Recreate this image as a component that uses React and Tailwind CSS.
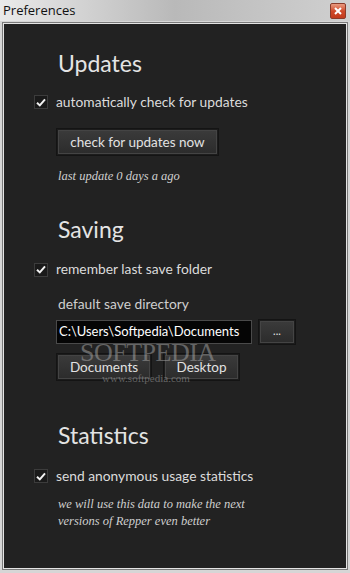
import React from 'react';

const sans = { fontFamily: 'Lato, "Open Sans", sans-serif' };
const serif = { fontFamily: '"Liberation Serif", serif' };

const Check = ({ checked = true }) => (
    <span className="w-[14px] h-[14px] flex items-center justify-center bg-[#1a1a1a] border border-[#3c3c3c] shrink-0">
        {checked && (
            <svg width="10" height="9" viewBox="0 0 10 9">
                <path d="M1 4.8 L3.8 7.4 L9 1.4" fill="none" stroke="#f2f2f2" strokeWidth="2" />
            </svg>
        )}
    </span>
);

const Btn = ({ children, className = '' }) => (
    <div className={`border border-[#141414] p-px bg-[#1c1c1c] ${className}`}>
        <div className="h-full flex items-center justify-center bg-gradient-to-b from-[#3a3a3a] to-[#2c2c2c] border border-[#444] text-[#e2e2e2] text-[13.5px]">
            {children}
        </div>
    </div>
);

export default function App() {
    return (
        <div className="w-[350px] h-[573px] flex flex-col bg-[#d4d4d4] select-none overflow-hidden" style={sans}>
            {/* Title bar */}
            <div className="h-[21px] shrink-0 flex items-center justify-between pl-[3px] pr-[4px] bg-gradient-to-r from-[#eaeaea] via-[#b9b9b9] to-[#d0d0d0]">
                <span className="text-[13px] text-[#111] leading-none" style={{ fontFamily: '"Open Sans", sans-serif' }}>Preferences</span>
                <div className="w-[16px] h-[16px] rounded-[2px] border border-[#8a3b2a] bg-gradient-to-b from-[#e89a80] via-[#cf4a2a] to-[#c23a1c] flex items-center justify-center">
                    <svg width="8" height="8" viewBox="0 0 8 8">
                        <path d="M1 1 L7 7 M7 1 L1 7" stroke="#fff" strokeWidth="2" />
                    </svg>
                </div>
            </div>

            {/* Window frame */}
            <div className="flex-1 flex flex-col px-[2px] pt-[1px] pb-[3px] bg-[#d6d6d6]">
                <div className="flex-1 border border-[#7a7a7a] p-px bg-[#e4e4e4]">
                    <div className="relative h-full bg-[#222222] text-[#dcdcdc] pl-[30px] pt-[28px]">
                        {/* Updates */}
                        <div className="pl-[24px] text-[23px] leading-none text-[#e4e4e4]">Updates</div>
                        <div className="mt-[17px] flex items-center gap-[8px] text-[13.8px]">
                            <Check />
                            <span>automatically check for updates</span>
                        </div>
                        <Btn className="ml-[22px] mt-[15px] w-[163px] h-[28px]">check for updates now</Btn>
                        <div className="ml-[24px] mt-[11px] text-[12.5px] italic text-[#cfcfcf]" style={serif}>
                            last update 0 days a ago
                        </div>

                        {/* Saving */}
                        <div className="pl-[24px] mt-[33px] text-[23px] leading-none text-[#e4e4e4]">Saving</div>
                        <div className="mt-[18px] flex items-center gap-[8px] text-[13.8px]">
                            <Check />
                            <span>remember last save folder</span>
                        </div>
                        <div className="ml-[24px] mt-[17px] text-[13.8px] leading-none text-[#cfcfcf]">default save directory</div>
                        <div className="ml-[22px] mt-[8px] flex items-center gap-[6px]">
                            <div className="w-[196px] h-[24px] border border-[#4a4a4a] bg-[#050505] flex items-center px-[2px] text-[13px] text-white whitespace-nowrap overflow-hidden">
                                C:\Users\Softpedia\Documents
                            </div>
                            <Btn className="w-[38px] h-[26px]">
                                <span className="text-[11px] leading-none -mt-[2px]">...</span>
                            </Btn>
                        </div>
                        <div className="ml-[22px] mt-[8px] flex gap-[11px]">
                            <Btn className="w-[96px] h-[28px]">Documents</Btn>
                            <Btn className="w-[77px] h-[28px]">Desktop</Btn>
                        </div>

                        {/* watermark */}
                        <div className="absolute left-[76px] top-[316px] pointer-events-none text-[26px] leading-none tracking-[-0.5px] text-[#a8a8a8] opacity-50" style={serif}>
                            SOFTPEDIA
                        </div>
                        <div className="absolute left-[98px] top-[349px] pointer-events-none text-[11px] leading-none text-[#a8a8a8] opacity-50" style={serif}>
                            www.softpedia.com
                        </div>

                        {/* Statistics */}
                        <div className="pl-[24px] mt-[43px] text-[23px] leading-none text-[#e4e4e4]">Statistics</div>
                        <div className="mt-[19px] flex items-center gap-[8px] text-[13.8px]">
                            <Check />
                            <span>send anonymous usage statistics</span>
                        </div>
                        <div className="ml-[24px] mt-[9px] text-[12.5px] leading-[17px] italic text-[#cfcfcf]" style={serif}>
                            we will use this data to make the next
                            <br />
                            versions of Repper even better
                        </div>
                    </div>
                </div>
            </div>
        </div>
    );
}
